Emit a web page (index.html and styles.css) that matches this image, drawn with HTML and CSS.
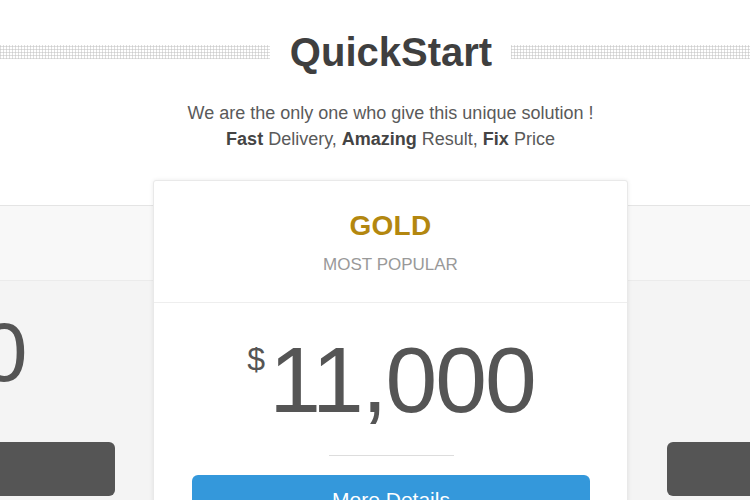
FILE: index.html
```html
<!DOCTYPE html>
<html lang="en">
<head>
<meta charset="utf-8">
<title>QuickStart Pricing</title>
<link rel="stylesheet" href="styles.css">
</head>
<body>
<div class="page">
  <header class="heading">
    <span class="rule"></span>
    <h1 class="title">QuickStart</h1>
    <span class="rule"></span>
  </header>
  <p class="lead">We are the only one who give this unique solution !<br><b>Fast</b> Delivery, <b>Amazing</b> Result, <b>Fix</b> Price</p>

  <div class="plans">
    <div class="plan side">
      <div class="plan-head"></div>
      <div class="plan-body">
        <div class="price"><span class="cur">$</span>5,000</div>
        <a class="btn btn-dark" href="#">More Details</a>
      </div>
    </div>

    <div class="plan featured">
      <div class="plan-head">
        <h2 class="plan-name gold">GOLD</h2>
        <p class="plan-tag">MOST POPULAR</p>
      </div>
      <div class="plan-body">
        <div class="price"><span class="cur">$</span>11,000</div>
        <hr class="divider">
        <a class="btn btn-blue" href="#">More Details</a>
      </div>
    </div>

    <div class="plan side">
      <div class="plan-head"></div>
      <div class="plan-body">
        <div class="price"><span class="cur">$</span>5,000</div>
        <a class="btn btn-dark" href="#">More Details</a>
      </div>
    </div>
  </div>
</div>
</body>
</html>
```

FILE: styles.css
```css
html, body {
  margin: 0;
  padding: 0;
  overflow: hidden;
  background: #fff;
}
body {
  font-family: "Liberation Sans", Arial, sans-serif;
  color: #555;
  width: 750px;
  height: 500px;
}
.page {
  width: 781px;
}

/* heading */
.heading {
  display: flex;
  align-items: center;
  padding-top: 28px;
}
.rule {
  flex: 1;
  height: 14px;
  background-image:
    repeating-linear-gradient(90deg, rgba(190,190,190,0.5) 0 1px, transparent 1px 3px),
    repeating-linear-gradient(0deg, rgba(190,190,190,0.5) 0 1px, transparent 1px 3px);
}
.title {
  margin: 0;
  padding: 0 19px 0 20px;
  font-size: 40px;
  line-height: 48px;
  font-weight: 700;
  color: #3f3f3f;
}

.lead {
  margin: 24px 0 0;
  text-align: center;
  font-size: 18px;
  line-height: 26px;
  color: #5a5a5a;
}
.lead b {
  color: #444;
}

/* plans */
.plans {
  display: flex;
  justify-content: center;
  align-items: flex-start;
  margin-top: 28px;
}
.plan {
  flex: 0 0 475px;
  width: 475px;
  box-sizing: border-box;
  text-align: center;
}
.plan-name {
  margin: 0;
  font-weight: 700;
}
.plan-tag {
  margin: 0;
}
.price {
  color: #555;
  white-space: nowrap;
}
.cur {
  display: inline-block;
  vertical-align: top;
  line-height: 1;
  letter-spacing: 0;
}
.btn {
  display: block;
  border-radius: 6px;
  color: #fff;
  text-decoration: none;
  font-size: 21px;
  line-height: 26px;
}

/* side plans */
.side {
  margin-top: 25px;
  border-top: 1px solid #e4e4e4;
  background: #f4f4f4;
  height: 400px;
}
.side .plan-head {
  height: 75px;
  background: #f8f8f8;
  border-bottom: 1px solid #ebebeb;
  box-sizing: border-box;
}
.side .plan-body {
  padding: 29px 38px 0 39px;
}
.side .price {
  font-size: 84px;
  line-height: 84px;
  letter-spacing: -3px;
}
.side .cur {
  font-size: 28px;
  margin-top: 9px;
  margin-right: 6px;
}
.btn-dark {
  margin-top: 48px;
  height: 54px;
  background: #555;
}

/* featured */
.featured {
  position: relative;
  z-index: 1;
  background: #fff;
  border: 1px solid #e9e9e9;
  border-radius: 3px 3px 0 0;
  box-shadow: 0 0 4px rgba(0, 0, 0, 0.08);
  height: 360px;
}
.featured .plan-head {
  padding: 29px 0 27px;
  border-bottom: 1px solid #eeeeee;
}
.gold {
  font-size: 28px;
  line-height: 32px;
  color: #b3870f;
  margin-bottom: 13px;
  letter-spacing: 0.3px;
}
.featured .plan-tag {
  font-size: 17px;
  line-height: 20px;
  color: #999;
}
.featured .plan-body {
  padding: 30px 37px 0 38px;
}
.featured .price {
  font-size: 93px;
  line-height: 95px;
  letter-spacing: -2px;
}
.featured .cur {
  font-size: 32px;
  margin-top: 10px;
  margin-right: 4px;
}
.divider {
  width: 125px;
  height: 0;
  margin: 27px auto 0;
  border: 0;
  border-top: 1px solid #dddddd;
}
.btn-blue {
  margin-top: 19px;
  padding: 12px 0 16px;
  background: #3498db;
}
```
